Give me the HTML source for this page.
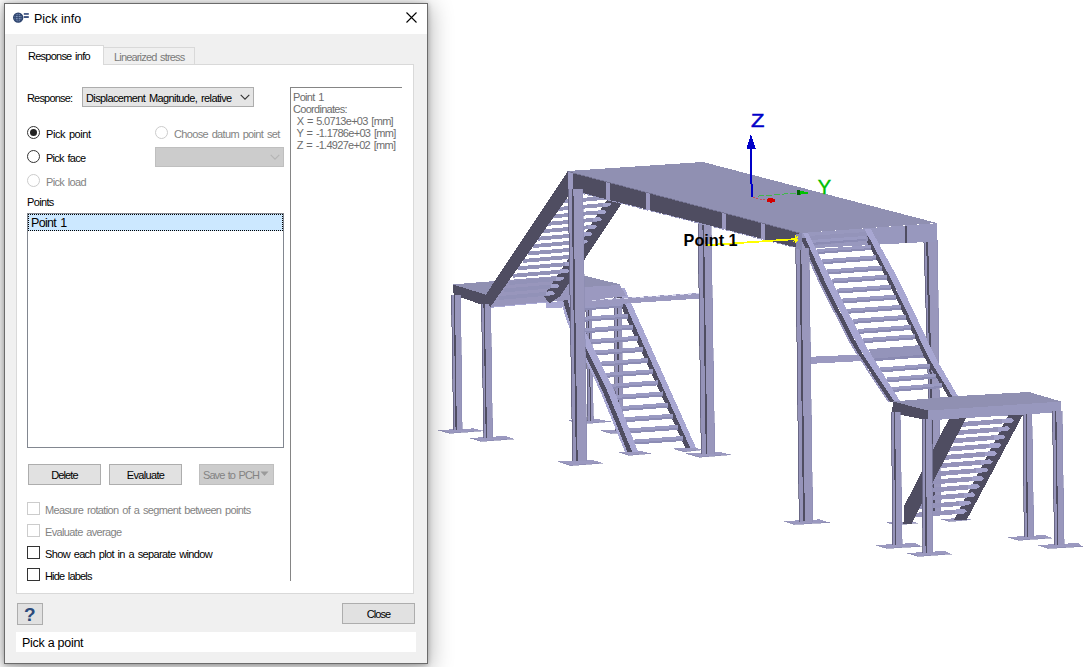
<!DOCTYPE html>
<html><head><meta charset="utf-8">
<style>
html,body{margin:0;padding:0;background:#fff;}
body{width:1087px;height:667px;position:relative;overflow:hidden;font-family:"Liberation Sans",sans-serif;font-size:11px;color:#000;}
.abs{position:absolute;}
#dlg{position:absolute;left:4px;top:3px;width:422px;height:659px;background:#f0f0f0;border:1px solid #6b6b6b;box-shadow:0 1px 5px rgba(0,0,0,.28),0 4px 22px 2px rgba(0,0,0,.30);}
#title{position:absolute;left:5px;top:4px;width:422px;height:30px;background:#fff;}
.t{position:absolute;white-space:nowrap;line-height:14px;}
.dis{color:#838383;}
.btn{position:absolute;box-sizing:border-box;border:1px solid #adadad;background:#e1e1e1;text-align:center;line-height:21px;}
.cb{position:absolute;box-sizing:border-box;width:13px;height:13px;border:1px solid #333;background:#fff;}
.cb.d{border-color:#ccc;}
.rd{position:absolute;box-sizing:border-box;width:13px;height:13px;border:1px solid #333;border-radius:50%;background:#fff;}
.rd.d{border-color:#ccc;}
</style></head><body>
<svg id="scene" class="abs" shape-rendering="crispEdges" style="left:0;top:0" width="1087" height="667" viewBox="0 0 1087 667">
<polygon points="685.7,453.5 718.0,451.5 731.3,454.7 700.0,457.2" fill="#9b99c0"/>
<line x1="685.7" y1="453.5" x2="700.0" y2="457.2" stroke="#8686ac" stroke-width="0.80"/>
<line x1="700.0" y1="457.2" x2="731.3" y2="454.7" stroke="#8686ac" stroke-width="0.60"/>
<polygon points="697.8,222.0 711.3,222.0 715.0,454.0 701.0,454.0" fill="#9997bc"/>
<polygon points="697.8,222.0 703.2,222.0 706.6,454.0 701.0,454.0" fill="#9593b9"/>
<line x1="703.2" y1="222.0" x2="706.6" y2="454.0" stroke="#4f4d61" stroke-width="1.60"/>
<line x1="698.1" y1="222.0" x2="701.3" y2="454.0" stroke="#5e5c78" stroke-width="0.80"/>
<line x1="711.0" y1="222.0" x2="714.7" y2="454.0" stroke="#8c8cb2" stroke-width="0.60"/>
<polygon points="923.6,240.0 937.7,240.0 941.0,513.0 932.0,513.0" fill="#9997bc"/>
<polygon points="923.6,240.0 927.1,240.0 934.2,513.0 932.0,513.0" fill="#9593b9"/>
<line x1="927.1" y1="240.0" x2="934.2" y2="513.0" stroke="#4f4d61" stroke-width="2.00"/>
<line x1="923.9" y1="240.0" x2="932.3" y2="513.0" stroke="#5e5c78" stroke-width="0.80"/>
<line x1="937.4" y1="240.0" x2="940.7" y2="513.0" stroke="#8c8cb2" stroke-width="0.60"/>
<polygon points="810.0,356.8 926.0,351.5 926.0,357.5 810.0,363.9" fill="#9b99c0"/>
<polygon points="569.0,420.5 598.0,419.2 611.0,421.5 584.0,423.8" fill="#9b99c0"/>
<line x1="569.0" y1="420.5" x2="584.0" y2="423.8" stroke="#8686ac" stroke-width="0.80"/>
<line x1="584.0" y1="423.8" x2="611.0" y2="421.5" stroke="#8686ac" stroke-width="0.60"/>
<polygon points="585.5,300.0 591.6,300.0 593.6,420.7 587.6,420.7" fill="#9997bc"/>
<polygon points="585.5,300.0 588.5,300.0 590.6,420.7 587.6,420.7" fill="#9593b9"/>
<line x1="588.5" y1="300.0" x2="590.6" y2="420.7" stroke="#4f4d61" stroke-width="1.00"/>
<line x1="585.8" y1="300.0" x2="587.9" y2="420.7" stroke="#5e5c78" stroke-width="0.80"/>
<line x1="591.3" y1="300.0" x2="593.3" y2="420.7" stroke="#8c8cb2" stroke-width="0.60"/>
<polygon points="600.7,430.5 628.0,429.0 638.0,431.5 612.0,433.5" fill="#9b99c0"/>
<line x1="600.7" y1="430.5" x2="612.0" y2="433.5" stroke="#8686ac" stroke-width="0.80"/>
<line x1="612.0" y1="433.5" x2="638.0" y2="431.5" stroke="#8686ac" stroke-width="0.60"/>
<polygon points="614.0,296.0 622.0,296.0 623.0,431.0 615.0,431.0" fill="#9997bc"/>
<polygon points="614.0,296.0 617.6,296.0 618.6,431.0 615.0,431.0" fill="#9593b9"/>
<line x1="617.6" y1="296.0" x2="618.6" y2="431.0" stroke="#4f4d61" stroke-width="1.20"/>
<line x1="614.3" y1="296.0" x2="615.3" y2="431.0" stroke="#5e5c78" stroke-width="0.80"/>
<line x1="621.7" y1="296.0" x2="622.7" y2="431.0" stroke="#8c8cb2" stroke-width="0.60"/>
<polygon points="674.0,448.6 693.0,447.2 702.0,449.8 684.0,451.8" fill="#9b99c0"/>
<line x1="674.0" y1="448.6" x2="684.0" y2="451.8" stroke="#8686ac" stroke-width="0.80"/>
<line x1="684.0" y1="451.8" x2="702.0" y2="449.8" stroke="#8686ac" stroke-width="0.60"/>
<polygon points="619.0,452.2 640.0,450.6 651.2,453.5 629.0,455.3" fill="#9b99c0"/>
<line x1="619.0" y1="452.2" x2="629.0" y2="455.3" stroke="#8686ac" stroke-width="0.80"/>
<line x1="629.0" y1="455.3" x2="651.2" y2="453.5" stroke="#8686ac" stroke-width="0.60"/>
<polygon points="617.7,288.0 624.5,288.0 696.1,448.0 690.3,448.0" fill="#a8a7d2"/>
<polygon points="616.4,296.0 621.4,296.0 690.3,448.0 685.3,448.0" fill="#4f4d61"/>
<polygon points="576.1,306.0 622.9,302.4 622.9,307.4 576.1,311.0" fill="#9a9ac2"/>
<polygon points="576.1,309.0 622.9,305.4 622.9,307.4 576.1,311.0" fill="#8c8cb4"/>
<polygon points="579.8,317.1 627.9,313.5 627.9,318.5 579.8,322.1" fill="#9a9ac2"/>
<polygon points="579.8,320.1 627.9,316.5 627.9,318.5 579.8,322.1" fill="#8c8cb4"/>
<polygon points="584.0,328.3 633.0,324.7 633.0,329.7 584.0,333.3" fill="#9a9ac2"/>
<polygon points="584.0,331.3 633.0,327.7 633.0,329.7 584.0,333.3" fill="#8c8cb4"/>
<polygon points="589.4,339.4 638.0,335.8 638.0,340.8 589.4,344.4" fill="#9a9ac2"/>
<polygon points="589.4,342.4 638.0,338.8 638.0,340.8 589.4,344.4" fill="#8c8cb4"/>
<polygon points="594.9,350.5 643.1,346.9 643.1,351.9 594.9,355.5" fill="#9a9ac2"/>
<polygon points="594.9,353.5 643.1,349.9 643.1,351.9 594.9,355.5" fill="#8c8cb4"/>
<polygon points="600.3,361.6 648.1,358.0 648.1,363.0 600.3,366.6" fill="#9a9ac2"/>
<polygon points="600.3,364.6 648.1,361.0 648.1,363.0 600.3,366.6" fill="#8c8cb4"/>
<polygon points="605.8,372.8 653.2,369.2 653.2,374.2 605.8,377.8" fill="#9a9ac2"/>
<polygon points="605.8,375.8 653.2,372.2 653.2,374.2 605.8,377.8" fill="#8c8cb4"/>
<polygon points="611.2,383.9 658.2,380.3 658.2,385.3 611.2,388.9" fill="#9a9ac2"/>
<polygon points="611.2,386.9 658.2,383.3 658.2,385.3 611.2,388.9" fill="#8c8cb4"/>
<polygon points="615.9,395.0 663.3,391.4 663.3,396.4 615.9,400.0" fill="#9a9ac2"/>
<polygon points="615.9,398.0 663.3,394.4 663.3,396.4 615.9,400.0" fill="#8c8cb4"/>
<polygon points="620.3,406.2 668.3,402.6 668.3,407.6 620.3,411.2" fill="#9a9ac2"/>
<polygon points="620.3,409.2 668.3,405.6 668.3,407.6 620.3,411.2" fill="#8c8cb4"/>
<polygon points="624.6,417.3 673.4,413.7 673.4,418.7 624.6,422.3" fill="#9a9ac2"/>
<polygon points="624.6,420.3 673.4,416.7 673.4,418.7 624.6,422.3" fill="#8c8cb4"/>
<polygon points="629.0,428.4 678.4,424.8 678.4,429.8 629.0,433.4" fill="#9a9ac2"/>
<polygon points="629.0,431.4 678.4,427.8 678.4,429.8 629.0,433.4" fill="#8c8cb4"/>
<polygon points="633.3,439.6 683.4,436.0 683.4,441.0 633.3,444.6" fill="#9a9ac2"/>
<polygon points="633.3,442.6 683.4,439.0 683.4,441.0 633.3,444.6" fill="#8c8cb4"/>
<polygon points="557.7,292.0 560.9,302.0 564.0,312.0 567.2,322.0 571.1,332.0 576.0,342.0 581.0,352.0 585.9,362.0 590.8,372.0 595.8,382.0 600.5,392.0 604.6,402.0 608.7,412.0 612.8,422.0 616.9,432.0 620.9,442.0 625.0,452.0 638.2,452.0 634.3,442.0 630.4,432.0 626.5,422.0 622.6,412.0 618.7,402.0 614.8,392.0 610.1,382.0 605.2,372.0 600.3,362.0 595.4,352.0 590.5,342.0 585.6,332.0 581.6,322.0 578.3,312.0 575.0,302.0 571.7,292.0" fill="#a8a7d2"/>
<polygon points="560.2,292.0 563.4,302.0 566.5,312.0 569.7,322.0 573.6,332.0 578.5,342.0 583.5,352.0 588.4,362.0 593.3,372.0 598.3,382.0 603.0,392.0 607.1,402.0 611.2,412.0 615.3,422.0 619.4,432.0 623.4,442.0 627.5,452.0 632.2,452.0 628.1,442.0 624.1,432.0 620.0,422.0 615.9,412.0 611.8,402.0 607.7,392.0 603.0,382.0 598.0,372.0 593.1,362.0 588.2,352.0 583.2,342.0 578.3,332.0 574.4,322.0 571.2,312.0 568.1,302.0 564.9,292.0" fill="#4f4d61"/>
<polygon points="584.0,300.4 699.0,292.8 699.0,298.6 584.0,306.4" fill="#9b99c0"/>
<line x1="584.0" y1="301.0" x2="699.0" y2="293.4" stroke="#d8d8ee" stroke-width="1.20" stroke-dasharray="4 4"/>
<polygon points="572.0,274.5 584.7,275.7 619.5,284.2 624.0,293.0 584.0,300.0 572.0,300.0" fill="#9090b2"/>
<polygon points="584.0,287.0 620.0,285.0 626.0,296.0 584.0,301.0" fill="#9b99c0"/>
<polygon points="452.6,284.4 575.0,274.6 575.0,299.5 546.0,302.2 490.4,307.3 485.8,294.6" fill="#9896bc"/>
<polygon points="452.6,284.4 500.0,281.0 485.8,294.6" fill="#9090b2"/>
<polygon points="546.0,302.4 561.5,301.2 561.5,307.5 546.0,307.8" fill="#a8a7d2"/>
<line x1="490.4" y1="307.3" x2="546.0" y2="302.2" stroke="#a8a7d2" stroke-width="1.00"/>
<polygon points="452.6,284.4 485.8,294.6 489.5,307.5 453.7,294.8" fill="#4f4d61"/>
<polygon points="438.0,430.0 473.5,428.4 482.6,430.9 450.0,433.3" fill="#9b99c0"/>
<line x1="438.0" y1="430.0" x2="450.0" y2="433.3" stroke="#8686ac" stroke-width="0.80"/>
<line x1="450.0" y1="433.3" x2="482.6" y2="430.9" stroke="#8686ac" stroke-width="0.60"/>
<polygon points="451.2,295.0 460.8,295.0 462.4,429.8 453.3,429.8" fill="#9997bc"/>
<polygon points="451.2,295.0 454.3,295.0 456.2,429.8 453.3,429.8" fill="#9593b9"/>
<line x1="454.3" y1="295.0" x2="456.2" y2="429.8" stroke="#4f4d61" stroke-width="1.30"/>
<line x1="451.5" y1="295.0" x2="453.6" y2="429.8" stroke="#5e5c78" stroke-width="0.80"/>
<line x1="460.5" y1="295.0" x2="462.1" y2="429.8" stroke="#8c8cb2" stroke-width="0.60"/>
<polygon points="469.5,438.0 505.0,436.0 514.0,439.0 480.6,441.5" fill="#9b99c0"/>
<line x1="469.5" y1="438.0" x2="480.6" y2="441.5" stroke="#8686ac" stroke-width="0.80"/>
<line x1="480.6" y1="441.5" x2="514.0" y2="439.0" stroke="#8686ac" stroke-width="0.60"/>
<polygon points="481.2,304.0 490.9,304.0 492.8,438.0 483.6,438.0" fill="#9997bc"/>
<polygon points="481.2,304.0 484.1,304.0 486.4,438.0 483.6,438.0" fill="#9593b9"/>
<line x1="484.1" y1="304.0" x2="486.4" y2="438.0" stroke="#4f4d61" stroke-width="1.30"/>
<line x1="481.5" y1="304.0" x2="483.9" y2="438.0" stroke="#5e5c78" stroke-width="0.80"/>
<line x1="490.6" y1="304.0" x2="492.5" y2="438.0" stroke="#8c8cb2" stroke-width="0.60"/>
<polygon points="624.6,199.0 609.6,196.0 543.9,296.0 549.3,303.5 560.0,296.5" fill="#4f4d61"/>
<polygon points="561.8,199.7 614.2,195.1 616.2,197.0 614.2,199.0 561.8,203.6" fill="#9292b8"/>
<polygon points="607.2,195.4 614.2,195.1 616.2,197.0 614.2,199.0 607.2,199.3" fill="#a2a2ca"/>
<polygon points="556.9,207.1 609.5,202.5 611.5,204.4 609.5,206.4 556.9,211.0" fill="#9292b8"/>
<polygon points="602.5,202.8 609.5,202.5 611.5,204.4 609.5,206.4 602.5,206.7" fill="#a2a2ca"/>
<polygon points="552.1,214.5 604.8,209.9 606.8,211.8 604.8,213.8 552.1,218.4" fill="#9292b8"/>
<polygon points="597.8,210.2 604.8,209.9 606.8,211.8 604.8,213.8 597.8,214.1" fill="#a2a2ca"/>
<polygon points="547.2,221.9 600.1,217.3 602.1,219.2 600.1,221.2 547.2,225.8" fill="#9292b8"/>
<polygon points="593.1,217.6 600.1,217.3 602.1,219.2 600.1,221.2 593.1,221.5" fill="#a2a2ca"/>
<polygon points="542.4,229.3 595.4,224.7 597.4,226.6 595.4,228.6 542.4,233.2" fill="#9292b8"/>
<polygon points="588.4,225.0 595.4,224.7 597.4,226.6 595.4,228.6 588.4,228.9" fill="#a2a2ca"/>
<polygon points="537.5,236.8 590.7,232.1 592.7,234.0 590.7,236.0 537.5,240.7" fill="#9292b8"/>
<polygon points="583.7,232.4 590.7,232.1 592.7,234.0 590.7,236.0 583.7,236.3" fill="#a2a2ca"/>
<polygon points="532.7,244.2 586.0,239.5 588.0,241.4 586.0,243.4 532.7,248.1" fill="#9292b8"/>
<polygon points="579.0,239.8 586.0,239.5 588.0,241.4 586.0,243.4 579.0,243.7" fill="#a2a2ca"/>
<polygon points="527.8,251.6 581.3,246.9 583.3,248.8 581.3,250.8 527.8,255.5" fill="#9292b8"/>
<polygon points="574.3,247.2 581.3,246.9 583.3,248.8 581.3,250.8 574.3,251.1" fill="#a2a2ca"/>
<polygon points="523.0,259.0 576.6,254.3 578.6,256.2 576.6,258.2 523.0,262.9" fill="#9292b8"/>
<polygon points="569.6,254.6 576.6,254.3 578.6,256.2 576.6,258.2 569.6,258.5" fill="#a2a2ca"/>
<polygon points="518.2,266.4 571.9,261.7 573.9,263.6 571.9,265.6 518.2,270.3" fill="#9292b8"/>
<polygon points="564.9,262.0 571.9,261.7 573.9,263.6 571.9,265.6 564.9,265.9" fill="#a2a2ca"/>
<polygon points="513.3,273.8 567.2,269.1 569.2,271.0 567.2,273.0 513.3,277.7" fill="#9292b8"/>
<polygon points="560.2,269.4 567.2,269.1 569.2,271.0 567.2,273.0 560.2,273.3" fill="#a2a2ca"/>
<polygon points="508.5,281.2 562.5,276.5 564.5,278.4 562.5,280.4 508.5,285.1" fill="#9292b8"/>
<polygon points="555.5,276.8 562.5,276.5 564.5,278.4 562.5,280.4 555.5,280.7" fill="#a2a2ca"/>
<polygon points="503.6,288.6 557.8,283.9 559.8,285.8 557.8,287.8 503.6,292.5" fill="#9292b8"/>
<polygon points="550.8,284.2 557.8,283.9 559.8,285.8 557.8,287.8 550.8,288.1" fill="#a2a2ca"/>
<polygon points="498.8,296.1 553.1,291.3 555.1,293.2 553.1,295.2 498.8,300.0" fill="#9292b8"/>
<polygon points="546.1,291.6 553.1,291.3 555.1,293.2 553.1,295.2 546.1,295.5" fill="#a2a2ca"/>
<polygon points="567.5,171.5 568.5,196.1 490.2,307.3 488.5,304.0 485.8,294.6" fill="#4f4d61"/>
<polygon points="567.0,171.0 703.0,162.0 937.0,223.0 801.0,233.0" fill="#9090b2"/>
<polygon points="567.0,171.0 801.0,233.0 801.0,248.8 568.0,189.5" fill="#4f4d61"/>
<polygon points="606.2,182.2 610.2,183.2 610.2,200.2 606.2,199.2" fill="#9b99c0"/>
<polygon points="645.8,192.7 649.8,193.7 649.8,210.3 645.8,209.3" fill="#9b99c0"/>
<polygon points="722.1,212.9 726.1,214.0 726.1,229.7 722.1,228.7" fill="#9b99c0"/>
<polygon points="760.8,223.1 764.8,224.2 764.8,239.6 760.8,238.6" fill="#9b99c0"/>
<polygon points="567.5,171.5 572.5,172.8 572.5,191.5 568.0,190.0" fill="#9b99c0"/>
<line x1="568.0" y1="189.8" x2="801.0" y2="249.1" stroke="#9a9ac0" stroke-width="1.00" stroke-dasharray="5 1.5"/>
<line x1="567.0" y1="171.3" x2="801.0" y2="233.3" stroke="#7c7c9c" stroke-width="0.80"/>
<polygon points="801.0,233.0 937.0,223.2 937.5,241.4 801.0,248.8" fill="#9898be"/>
<polygon points="905.0,226.2 907.0,226.1 907.0,243.4 905.0,243.5" fill="#4f4d61"/>
<polygon points="864.6,229.2 870.2,239.7 875.7,250.2 881.3,260.7 886.8,271.1 892.3,281.6 897.3,292.1 902.3,302.6 907.3,313.1 912.4,323.6 917.4,334.1 922.4,344.6 927.4,355.1 933.2,365.5 939.7,376.0 946.1,386.5 952.6,397.0 958.4,397.0 952.3,386.5 946.2,376.0 940.0,365.5 934.4,355.1 929.4,344.6 924.5,334.1 919.5,323.6 914.5,313.1 909.5,302.6 904.5,292.1 899.5,281.6 893.9,271.1 888.2,260.7 882.4,250.2 876.7,239.7 871.0,229.2" fill="#a8a7d2"/>
<polygon points="864.0,236.0 869.3,246.1 874.7,256.1 880.0,266.2 885.3,276.2 890.3,286.3 895.1,296.4 900.0,306.4 904.8,316.5 909.6,326.6 914.4,336.6 919.2,346.7 924.0,356.8 929.8,366.8 936.0,376.9 942.2,386.9 948.4,397.0 952.6,397.0 946.4,386.9 940.2,376.9 934.0,366.8 928.2,356.8 923.4,346.7 918.6,336.6 913.8,326.6 909.0,316.5 904.2,306.4 899.3,296.4 894.5,286.3 889.5,276.2 884.2,266.2 878.9,256.1 873.5,246.1 868.2,236.0" fill="#4f4d61"/>
<polygon points="808.0,236.0 866.0,232.0 868.5,240.5 812.5,245.5" fill="#9494ba"/>
<polygon points="812.3,239.9 866.0,235.9 866.0,240.9 812.3,244.9" fill="#9a9ac2"/>
<polygon points="812.3,242.8 866.0,238.8 866.0,240.9 812.3,244.9" fill="#8c8cb4"/>
<polygon points="816.9,249.1 870.8,245.1 870.8,250.1 816.9,254.1" fill="#9a9ac2"/>
<polygon points="816.9,252.0 870.8,248.0 870.8,250.1 816.9,254.1" fill="#8c8cb4"/>
<polygon points="822.0,259.3 876.2,255.3 876.2,260.3 822.0,264.3" fill="#9a9ac2"/>
<polygon points="822.0,262.2 876.2,258.2 876.2,260.3 822.0,264.3" fill="#8c8cb4"/>
<polygon points="827.1,269.5 881.6,265.5 881.6,270.5 827.1,274.5" fill="#9a9ac2"/>
<polygon points="827.1,272.4 881.6,268.4 881.6,270.5 827.1,274.5" fill="#8c8cb4"/>
<polygon points="831.7,278.7 886.5,274.7 886.5,279.7 831.7,283.7" fill="#9a9ac2"/>
<polygon points="831.7,281.6 886.5,277.6 886.5,279.7 831.7,283.7" fill="#8c8cb4"/>
<polygon points="836.8,288.7 891.4,284.7 891.4,289.7 836.8,293.7" fill="#9a9ac2"/>
<polygon points="836.8,291.6 891.4,287.6 891.4,289.7 836.8,293.7" fill="#8c8cb4"/>
<polygon points="842.0,298.6 896.2,294.6 896.2,299.6 842.0,303.6" fill="#9a9ac2"/>
<polygon points="842.0,301.5 896.2,297.5 896.2,299.6 842.0,303.6" fill="#8c8cb4"/>
<polygon points="847.3,308.8 901.1,304.8 901.1,309.8 847.3,313.8" fill="#9a9ac2"/>
<polygon points="847.3,311.7 901.1,307.7 901.1,309.8 847.3,313.8" fill="#8c8cb4"/>
<polygon points="852.6,318.9 905.9,314.9 905.9,319.9 852.6,323.9" fill="#9a9ac2"/>
<polygon points="852.6,321.8 905.9,317.8 905.9,319.9 852.6,323.9" fill="#8c8cb4"/>
<polygon points="857.9,329.0 910.7,325.0 910.7,330.0 857.9,334.0" fill="#9a9ac2"/>
<polygon points="857.9,331.9 910.7,327.9 910.7,330.0 857.9,334.0" fill="#8c8cb4"/>
<polygon points="862.8,338.3 915.2,334.3 915.2,339.3 862.8,343.3" fill="#9a9ac2"/>
<polygon points="862.8,341.2 915.2,337.2 915.2,339.3 862.8,343.3" fill="#8c8cb4"/>
<polygon points="868.6,349.2 919.1,345.2 924.1,357.2 874.1,361.2" fill="#9494ba"/>
<polygon points="872.6,358.7 923.1,354.7 924.1,357.2 874.1,361.2" fill="#8a8ab2"/>
<polygon points="880.3,367.5 930.0,363.5 930.0,368.5 880.3,372.5" fill="#9a9ac2"/>
<polygon points="880.3,370.4 930.0,366.4 930.0,368.5 880.3,372.5" fill="#8c8cb4"/>
<polygon points="886.5,377.5 936.2,373.5 936.2,378.5 886.5,382.5" fill="#9a9ac2"/>
<polygon points="886.5,380.4 936.2,376.4 936.2,378.5 886.5,382.5" fill="#8c8cb4"/>
<polygon points="892.4,387.0 942.0,383.0 942.0,388.0 892.4,392.0" fill="#9a9ac2"/>
<polygon points="892.4,389.9 942.0,385.9 942.0,388.0 892.4,392.0" fill="#8c8cb4"/>
<polygon points="802.9,232.7 807.7,243.2 812.4,253.7 817.2,264.3 821.9,274.8 826.7,285.3 831.9,295.8 837.4,306.3 842.8,316.9 848.2,327.4 853.7,337.9 859.2,348.4 866.1,358.9 873.1,369.4 880.0,380.0 887.0,390.5 893.9,401.0 900.0,401.0 893.5,390.5 886.9,380.0 880.4,369.4 873.9,358.9 867.4,348.4 861.8,337.9 856.3,327.4 850.7,316.9 845.2,306.3 839.7,295.8 834.2,285.3 829.0,274.8 823.7,264.3 818.5,253.7 813.2,243.2 808.0,232.7" fill="#a8a7d2"/>
<polygon points="800.7,238.0 805.3,248.2 810.0,258.5 814.6,268.8 819.2,279.0 823.9,289.2 829.2,299.5 834.5,309.8 839.8,320.0 845.1,330.2 850.4,340.5 856.1,350.8 862.9,361.0 869.7,371.2 876.4,381.5 883.2,391.8 890.0,402.0 894.6,402.0 887.8,391.8 881.0,381.5 874.3,371.2 867.5,361.0 860.7,350.8 855.0,340.5 849.7,330.2 844.4,320.0 839.1,309.8 833.8,299.5 828.5,289.2 823.8,279.0 819.2,268.8 814.6,258.5 809.9,248.2 805.3,238.0" fill="#4f4d61"/>
<polygon points="801.4,244.0 805.9,253.9 810.3,263.8 814.8,273.6 819.3,283.5 824.1,293.4 829.2,303.2 834.3,313.1 839.4,323.0 844.5,332.9 849.6,342.8 855.4,352.6 861.9,362.5 868.4,372.4 874.9,382.2 881.5,392.1 888.0,402.0 890.0,402.0 883.5,392.1 876.9,382.2 870.4,372.4 863.9,362.5 857.4,352.6 851.6,342.8 846.5,332.9 841.4,323.0 836.3,313.1 831.2,303.2 826.1,293.4 821.3,283.5 816.8,273.6 812.3,263.8 807.9,253.9 803.4,244.0" fill="#9b99c0"/>
<polygon points="558.2,461.2 591.6,459.6 602.8,463.2 570.4,465.7" fill="#9b99c0"/>
<line x1="558.2" y1="461.2" x2="570.4" y2="465.7" stroke="#8686ac" stroke-width="0.80"/>
<line x1="570.4" y1="465.7" x2="602.8" y2="463.2" stroke="#8686ac" stroke-width="0.60"/>
<polygon points="568.0,189.0 583.0,189.0 587.2,461.2 572.4,461.2" fill="#9997bc"/>
<polygon points="568.0,189.0 572.5,189.0 576.8,461.2 572.4,461.2" fill="#9593b9"/>
<line x1="572.5" y1="189.0" x2="576.8" y2="461.2" stroke="#4f4d61" stroke-width="1.80"/>
<line x1="568.3" y1="189.0" x2="572.7" y2="461.2" stroke="#5e5c78" stroke-width="0.80"/>
<line x1="582.7" y1="189.0" x2="586.9" y2="461.2" stroke="#8c8cb2" stroke-width="0.60"/>
<polygon points="784.0,521.0 819.4,519.4 829.6,522.5 795.0,524.5" fill="#9b99c0"/>
<line x1="784.0" y1="521.0" x2="795.0" y2="524.5" stroke="#8686ac" stroke-width="0.80"/>
<line x1="795.0" y1="524.5" x2="829.6" y2="522.5" stroke="#8686ac" stroke-width="0.60"/>
<polygon points="795.5,247.5 809.2,247.5 813.0,521.5 799.0,521.5" fill="#9997bc"/>
<polygon points="795.5,247.5 800.4,247.5 804.0,521.5 799.0,521.5" fill="#9593b9"/>
<line x1="800.4" y1="247.5" x2="804.0" y2="521.5" stroke="#4f4d61" stroke-width="1.80"/>
<line x1="795.8" y1="247.5" x2="799.3" y2="521.5" stroke="#5e5c78" stroke-width="0.80"/>
<line x1="808.9" y1="247.5" x2="812.7" y2="521.5" stroke="#8c8cb2" stroke-width="0.60"/>
<polygon points="796.0,234.0 801.5,233.0 801.5,250.0 796.0,249.0" fill="#8a8ab0"/>
<polygon points="1007.7,537.0 1045.0,535.0 1052.0,538.0 1018.8,540.3" fill="#9b99c0"/>
<line x1="1007.7" y1="537.0" x2="1018.8" y2="540.3" stroke="#8686ac" stroke-width="0.80"/>
<line x1="1018.8" y1="540.3" x2="1052.0" y2="538.0" stroke="#8686ac" stroke-width="0.60"/>
<polygon points="1022.9,405.0 1032.0,405.0 1034.0,537.0 1023.9,537.0" fill="#9997bc"/>
<polygon points="1022.9,405.0 1026.1,405.0 1027.4,537.0 1023.9,537.0" fill="#9593b9"/>
<line x1="1026.1" y1="405.0" x2="1027.4" y2="537.0" stroke="#4f4d61" stroke-width="1.30"/>
<line x1="1023.2" y1="405.0" x2="1024.2" y2="537.0" stroke="#5e5c78" stroke-width="0.80"/>
<line x1="1031.7" y1="405.0" x2="1033.7" y2="537.0" stroke="#8c8cb2" stroke-width="0.60"/>
<polygon points="887.0,522.5 912.0,521.3 917.6,523.0 896.0,525.0" fill="#9b99c0"/>
<line x1="887.0" y1="522.5" x2="896.0" y2="525.0" stroke="#8686ac" stroke-width="0.80"/>
<line x1="896.0" y1="525.0" x2="917.6" y2="523.0" stroke="#8686ac" stroke-width="0.60"/>
<polygon points="940.9,519.0 965.0,517.8 971.0,519.7 950.0,521.5" fill="#9b99c0"/>
<line x1="940.9" y1="519.0" x2="950.0" y2="521.5" stroke="#8686ac" stroke-width="0.80"/>
<line x1="950.0" y1="521.5" x2="971.0" y2="519.7" stroke="#8686ac" stroke-width="0.60"/>
<polygon points="1011.0,410.0 1025.5,410.0 966.8,519.7 954.0,519.7" fill="#4f4d61"/>
<polygon points="961.1,422.1 1011.7,418.0 1014.2,420.4 1011.7,422.7 961.1,426.9" fill="#9593ba"/>
<polygon points="1002.2,418.8 1011.7,418.0 1014.2,420.4 1011.7,422.7 1002.2,423.5" fill="#a2a1ca"/>
<polygon points="956.9,430.4 1007.4,426.3 1009.9,428.6 1007.4,431.0 956.9,435.1" fill="#9593ba"/>
<polygon points="997.9,427.1 1007.4,426.3 1009.9,428.6 1007.4,431.0 997.9,431.8" fill="#a2a1ca"/>
<polygon points="952.6,438.6 1003.1,434.5 1005.6,436.9 1003.1,439.2 952.6,443.4" fill="#9593ba"/>
<polygon points="993.6,435.3 1003.1,434.5 1005.6,436.9 1003.1,439.2 993.6,440.0" fill="#a2a1ca"/>
<polygon points="948.4,446.9 998.8,442.8 1001.3,445.1 998.8,447.5 948.4,451.6" fill="#9593ba"/>
<polygon points="989.3,443.6 998.8,442.8 1001.3,445.1 998.8,447.5 989.3,448.3" fill="#a2a1ca"/>
<polygon points="944.1,455.1 994.5,451.0 997.0,453.4 994.5,455.7 944.1,459.9" fill="#9593ba"/>
<polygon points="985.0,451.8 994.5,451.0 997.0,453.4 994.5,455.7 985.0,456.5" fill="#a2a1ca"/>
<polygon points="939.9,463.4 990.2,459.3 992.7,461.6 990.2,464.0 939.9,468.1" fill="#9593ba"/>
<polygon points="980.7,460.1 990.2,459.3 992.7,461.6 990.2,464.0 980.7,464.8" fill="#a2a1ca"/>
<polygon points="935.6,471.6 985.9,467.5 988.4,469.9 985.9,472.2 935.6,476.4" fill="#9593ba"/>
<polygon points="976.4,468.3 985.9,467.5 988.4,469.9 985.9,472.2 976.4,473.0" fill="#a2a1ca"/>
<polygon points="931.4,479.9 981.6,475.8 984.1,478.1 981.6,480.5 931.4,484.6" fill="#9593ba"/>
<polygon points="972.1,476.6 981.6,475.8 984.1,478.1 981.6,480.5 972.1,481.3" fill="#a2a1ca"/>
<polygon points="927.1,488.1 977.3,484.0 979.8,486.4 977.3,488.7 927.1,492.9" fill="#9593ba"/>
<polygon points="967.8,484.8 977.3,484.0 979.8,486.4 977.3,488.7 967.8,489.5" fill="#a2a1ca"/>
<polygon points="922.9,496.4 973.0,492.3 975.5,494.6 973.0,497.0 922.9,501.1" fill="#9593ba"/>
<polygon points="963.5,493.1 973.0,492.3 975.5,494.6 973.0,497.0 963.5,497.8" fill="#a2a1ca"/>
<polygon points="918.6,504.6 968.7,500.5 971.2,502.9 968.7,505.2 918.6,509.4" fill="#9593ba"/>
<polygon points="959.2,501.3 968.7,500.5 971.2,502.9 968.7,505.2 959.2,506.0" fill="#a2a1ca"/>
<polygon points="914.3,512.9 964.4,508.8 966.9,511.2 964.4,513.5 914.3,517.6" fill="#9593ba"/>
<polygon points="954.9,509.6 964.4,508.8 966.9,511.2 964.4,513.5 954.9,514.3" fill="#a2a1ca"/>
<polygon points="953.5,410.0 970.2,410.0 911.5,523.7 903.4,523.7 904.4,505.5" fill="#4f4d61"/>
<polygon points="893.0,401.5 958.0,396.0 1029.0,392.0 1061.3,401.5 928.0,410.6" fill="#9090b2"/>
<polygon points="893.0,401.5 928.0,410.6 928.0,420.4 892.0,413.0" fill="#4f4d61"/>
<polygon points="928.0,410.6 1061.3,401.5 1061.3,412.2 928.0,420.4" fill="#9898be"/>
<polygon points="876.0,545.0 914.6,543.0 921.7,546.4 887.0,548.4" fill="#9b99c0"/>
<line x1="876.0" y1="545.0" x2="887.0" y2="548.4" stroke="#8686ac" stroke-width="0.80"/>
<line x1="887.0" y1="548.4" x2="921.7" y2="546.4" stroke="#8686ac" stroke-width="0.60"/>
<polygon points="891.3,412.0 900.4,412.0 902.4,545.0 892.3,545.0" fill="#9997bc"/>
<polygon points="891.3,412.0 894.5,412.0 895.8,545.0 892.3,545.0" fill="#9593b9"/>
<line x1="894.5" y1="412.0" x2="895.8" y2="545.0" stroke="#4f4d61" stroke-width="1.30"/>
<line x1="891.6" y1="412.0" x2="892.6" y2="545.0" stroke="#5e5c78" stroke-width="0.80"/>
<line x1="900.1" y1="412.0" x2="902.1" y2="545.0" stroke="#8c8cb2" stroke-width="0.60"/>
<polygon points="1038.0,545.0 1078.0,543.0 1082.6,546.5 1049.0,548.5" fill="#9b99c0"/>
<line x1="1038.0" y1="545.0" x2="1049.0" y2="548.5" stroke="#8686ac" stroke-width="0.80"/>
<line x1="1049.0" y1="548.5" x2="1082.6" y2="546.5" stroke="#8686ac" stroke-width="0.60"/>
<polygon points="1052.2,411.0 1062.3,411.0 1064.4,545.0 1054.2,545.0" fill="#9997bc"/>
<polygon points="1052.2,411.0 1055.7,411.0 1057.8,545.0 1054.2,545.0" fill="#9593b9"/>
<line x1="1055.7" y1="411.0" x2="1057.8" y2="545.0" stroke="#4f4d61" stroke-width="1.30"/>
<line x1="1052.5" y1="411.0" x2="1054.5" y2="545.0" stroke="#5e5c78" stroke-width="0.80"/>
<line x1="1062.0" y1="411.0" x2="1064.1" y2="545.0" stroke="#8c8cb2" stroke-width="0.60"/>
<polygon points="906.5,553.0 945.0,551.0 951.6,554.0 917.6,556.5" fill="#9b99c0"/>
<line x1="906.5" y1="553.0" x2="917.6" y2="556.5" stroke="#8686ac" stroke-width="0.80"/>
<line x1="917.6" y1="556.5" x2="951.6" y2="554.0" stroke="#8686ac" stroke-width="0.60"/>
<polygon points="921.7,419.0 932.2,419.0 932.8,553.0 922.7,553.0" fill="#9997bc"/>
<polygon points="921.7,419.0 925.4,419.0 926.2,553.0 922.7,553.0" fill="#9593b9"/>
<line x1="925.4" y1="419.0" x2="926.2" y2="553.0" stroke="#4f4d61" stroke-width="1.30"/>
<line x1="922.0" y1="419.0" x2="923.0" y2="553.0" stroke="#5e5c78" stroke-width="0.80"/>
<line x1="931.9" y1="419.0" x2="932.5" y2="553.0" stroke="#8c8cb2" stroke-width="0.60"/>
<line x1="751.7" y1="197.0" x2="751.0" y2="146.0" stroke="#0000c8" stroke-width="2.00"/>
<polygon points="750.9,134.0 755.6,148.5 746.6,148.5" fill="#0000c8"/>
<text x="751" y="126.700" font-family="Liberation Sans, sans-serif" font-size="19" fill="#0000c8" stroke="#0000c8" stroke-width="0.500" textLength="13.400" lengthAdjust="spacingAndGlyphs">Z</text>
<line x1="753.0" y1="197.3" x2="766.0" y2="200.3" stroke="#e03030" stroke-width="0.70" stroke-dasharray="2 1.5"/>
<ellipse cx="770.800" cy="200.400" rx="4.200" ry="2.200" fill="#d40000"/>
<line x1="758.0" y1="196.1" x2="797.0" y2="193.0" stroke="#20c820" stroke-width="0.70" stroke-dasharray="6 2"/>
<polygon points="797.5,190.0 810.5,193.2 797.5,195.0" fill="#00c000"/>
<polygon points="796.5,189.8 800.0,189.8 800.0,194.5 796.5,194.5" fill="#006400"/>
<text x="817.800" y="194" font-family="Liberation Sans, sans-serif" font-size="19.500" fill="#00c000" stroke="#00c000" stroke-width="0.400" textLength="13.400" lengthAdjust="spacingAndGlyphs">Y</text>
<line x1="705.0" y1="245.3" x2="794.0" y2="239.2" stroke="#ffff00" stroke-width="1.80"/>
<path d="M795.300 234l0.900 3.400 2.300-1.600-1.500 2.800 2 1.800-2.400 0.300-0.400 3.800-1.200-3.400-2.600 1.200 1.800-2.500-1.800-2 2.500 0.200z" fill="#ffff00"/>
<text x="683.600" y="245.800" font-family="Liberation Sans, sans-serif" font-size="16.500" font-weight="bold" fill="#000" textLength="54" lengthAdjust="spacingAndGlyphs">Point 1</text>
</svg>
<div id="dlg"></div>
<div id="title"></div>
<svg class="abs" style="left:12px;top:11px" width="18" height="14" viewBox="0 0 18 14">
<circle cx="6.200" cy="6.600" r="4.500" fill="#7f94b8" stroke="#2f456f" stroke-width="1.400"/>
<path d="M6.200 2v9.200M1.600 6.600h9.200M4.200 2.800c-1.300 2.400-1.300 5.200 0 7.600M8.200 2.800c1.300 2.400 1.300 5.200 0 7.600M2.400 4.400h7.600M2.400 8.800h7.600" stroke="#2f456f" stroke-width="0.900" fill="none"/>
<rect x="11.800" y="2.100" width="5" height="1.700" fill="#3c5280"/><rect x="11.800" y="5.100" width="5" height="1.900" fill="#3c5280"/>
</svg>
<div class="t" style="left:34px;top:11px;font-size:12.5px;line-height:16px;">Pick info</div>
<svg class="abs" style="left:405px;top:11px" width="13" height="13" viewBox="0 0 13 13"><path d="M1.500 1.500l10 10M11.500 1.500l-10 10" stroke="#000" stroke-width="1.100" fill="none"/></svg>

<!-- tab panel -->
<div class="abs" style="left:16px;top:64px;width:398px;height:530px;box-sizing:border-box;background:#fff;border:1px solid #d9d9d9;"></div>
<div class="abs" style="left:103px;top:47px;width:92px;height:18px;box-sizing:border-box;background:#f0f0f0;border:1px solid #d9d9d9;"></div>
<div class="abs" style="left:16px;top:45px;width:88px;height:20px;box-sizing:border-box;background:#fff;border:1px solid #d9d9d9;border-bottom:none;"></div>
<div class="t" id="tab1" style="word-spacing:1.3px;letter-spacing:-0.756px;left:28px;top:49px;">Response info</div>
<div class="t dis" id="tab2" style="word-spacing:1.3px;letter-spacing:-0.827px;left:114px;top:50px;color:#7a7a7a;">Linearized stress</div>

<div class="t" id="lresp" style="word-spacing:1.3px;letter-spacing:-0.822px;left:27px;top:91px;">Response:</div>
<div class="abs" style="left:82px;top:87px;width:172px;height:20px;box-sizing:border-box;background:#e5e5e5;border:1px solid #adadad;"></div>
<div class="t" id="combo" style="word-spacing:1.3px;letter-spacing:-0.614px;left:86px;top:91px;">Displacement Magnitude, relative</div>
<svg class="abs" style="left:240px;top:94px" width="10" height="7" viewBox="0 0 10 7"><path d="M0.700 0.800l4.300 4.300l4.300-4.300" stroke="#333" stroke-width="1.100" fill="none"/></svg>

<div class="rd" style="left:27px;top:126px;"></div><div class="abs" style="left:30px;top:129px;width:7px;height:7px;border-radius:50%;background:#222;"></div>
<div class="t" id="r1" style="word-spacing:1.3px;letter-spacing:-0.450px;left:46px;top:127px;">Pick point</div>
<div class="rd" style="left:27px;top:150px;"></div>
<div class="t" id="r2" style="word-spacing:1.3px;letter-spacing:-0.726px;left:46px;top:151px;">Pick face</div>
<div class="rd d" style="left:27px;top:174px;"></div>
<div class="t dis" id="r3" style="word-spacing:1.3px;letter-spacing:-0.660px;left:46px;top:175px;">Pick load</div>
<div class="rd d" style="left:155px;top:126px;"></div>
<div class="t dis" id="r4" style="word-spacing:1.3px;letter-spacing:-0.659px;left:174px;top:127px;">Choose datum point set</div>
<div class="abs" style="left:155px;top:147px;width:129px;height:20px;box-sizing:border-box;background:#cccccc;border:1px solid #bfbfbf;"></div>
<svg class="abs" style="left:270px;top:154px" width="10" height="7" viewBox="0 0 10 7"><path d="M0.700 0.800l4.300 4.300l4.300-4.300" stroke="#b4b4b4" stroke-width="1.100" fill="none"/></svg>

<div class="t" id="lpts" style="word-spacing:1.3px;letter-spacing:-0.646px;left:27px;top:195px;">Points</div>
<div class="abs" style="left:27px;top:213px;width:257px;height:235px;box-sizing:border-box;background:#fff;border:1px solid #828790;"></div>
<div class="abs" style="left:28px;top:214px;width:255px;height:17px;box-sizing:border-box;background:#cce8ff;border:1px dotted #000;"></div>
<div class="t" id="li1" style="word-spacing:1.3px;letter-spacing:-0.688px;left:31px;top:216px;font-size:12.500px;line-height:15px;">Point 1</div>

<!-- info box -->
<div class="abs" style="left:290px;top:87px;width:112px;height:1px;background:#858585;"></div>
<div class="abs" style="left:290px;top:87px;width:1px;height:494px;background:#858585;"></div>
<div class="t" id="info" style="word-spacing:1.3px;letter-spacing:-0.705px;left:293px;top:91px;color:#6d6d6d;line-height:12px;white-space:pre;">Point 1
Coordinates:
 X = 5.0713e+03 [mm]
 Y = -1.1786e+03 [mm]
 Z = -1.4927e+02 [mm]</div>

<div class="btn" style="left:28px;top:464px;width:73px;height:21px;"><span id="b1" style="word-spacing:1.3px;letter-spacing:-0.916px;">Delete</span></div>
<div class="btn" style="left:109px;top:464px;width:73px;height:21px;"><span id="b2" style="word-spacing:1.3px;letter-spacing:-0.664px;">Evaluate</span></div>
<div class="btn" style="left:199px;top:464px;width:75px;height:21px;background:#cccccc;border-color:#bfbfbf;color:#838383;text-align:left;padding-left:3px;"><span id="b3" style="word-spacing:1.3px;letter-spacing:-0.935px;">Save to PCH</span></div>
<svg class="abs" style="left:260px;top:471px" width="9" height="6" viewBox="0 0 9 6"><path d="M0.500 0.500h8l-4 4.500z" fill="#9a9a9a"/></svg>

<div class="cb d" style="left:27px;top:502px;"></div><div class="t dis" id="c1" style="word-spacing:1.3px;letter-spacing:-0.649px;left:45px;top:503px;">Measure rotation of a segment between points</div>
<div class="cb d" style="left:27px;top:524px;"></div><div class="t dis" id="c2" style="word-spacing:1.3px;letter-spacing:-0.651px;left:45px;top:525px;">Evaluate average</div>
<div class="cb" style="left:27px;top:546px;"></div><div class="t" id="c3" style="word-spacing:1.3px;letter-spacing:-0.641px;left:45px;top:547px;">Show each plot in a separate window</div>
<div class="cb" style="left:27px;top:568px;"></div><div class="t" id="c4" style="word-spacing:1.3px;letter-spacing:-0.830px;left:45px;top:569px;">Hide labels</div>

<div class="btn" style="left:17px;top:603px;width:26px;height:22px;"></div>
<div class="t" id="q" style="left:24px;top:604px;font-size:19px;line-height:22px;font-weight:bold;color:#2b4a7a;">?</div>
<div class="btn" style="left:342px;top:603px;width:73px;height:21px;line-height:21px;"><span id="b4" style="word-spacing:1.3px;letter-spacing:-0.925px;">Close</span></div>
<div class="abs" style="left:16px;top:632px;width:400px;height:20px;background:#fff;"></div>
<div class="t" id="st" style="letter-spacing:-0.277px;left:22px;top:636px;font-size:12.500px;line-height:15px;">Pick a point</div>
</body></html>
